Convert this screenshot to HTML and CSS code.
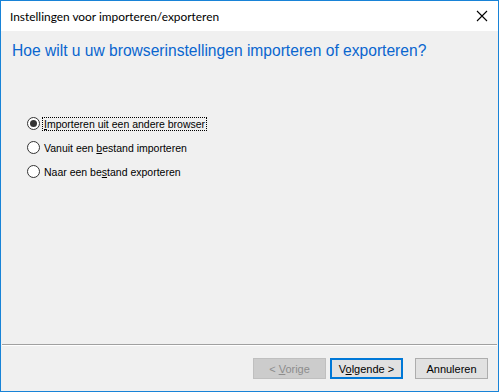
FILE: index.html
```html
<!DOCTYPE html>
<html lang="nl">

<head>
    <meta charset="UTF-8">
    <title>Instellingen voor importeren/exporteren</title>
    <link rel="stylesheet" href="styles.css">
</head>

<body>
    <div class="window">

        <div class="titlebar">
            <span class="title">Instellingen voor importeren/exporteren</span>
            <svg class="close" width="12" height="12" viewBox="0 0 12 12">
                <path d="M1 1 L11 11 M11 1 L1 11" stroke="#000" stroke-width="1.1" fill="none"/>
            </svg>
        </div>

        <div class="content">
            <h1 class="question">Hoe wilt u uw browserinstellingen importeren of exporteren?</h1>

            <div class="options">
                <label class="option">
                    <span class="radio checked"></span>
                    <span class="label focus"><u>I</u>mporteren uit een andere browser</span>
                </label>
                <label class="option">
                    <span class="radio"></span>
                    <span class="label">Vanuit een <u>b</u>estand importeren</span>
                </label>
                <label class="option">
                    <span class="radio"></span>
                    <span class="label">Naar een be<u>s</u>tand exporteren</span>
                </label>
            </div>
        </div>

        <div class="separator"></div>

        <div class="footer">
            <button type="button" class="btn disabled">&lt; <u>V</u>orige</button>
            <button type="button" class="btn default">V<u>o</u>lgende &gt;</button>
            <button type="button" class="btn cancel">Annuleren</button>
        </div>
    </div>
</body>

</html>
```

FILE: styles.css
```css
html, body {
    margin: 0;
    padding: 0;
}

.window {
    width: 499px;
    height: 392px;
    box-sizing: border-box;
    border: 1px solid #1883d7;
    background-color: #f0f0f0;
    display: flex;
    flex-direction: column;
    font-family: "Liberation Sans", Arial, sans-serif;
}

.titlebar {
    height: 30px;
    background-color: #fff;
    display: flex;
    align-items: center;
    justify-content: space-between;
    padding: 0 10px 0 9px;
}

.title {
    font-family: "Lato", "Open Sans", sans-serif;
    font-size: 11.9px;
    color: #000;
}

.content {
    flex: 1;
    padding: 0 11px;
}

.question {
    font-weight: normal;
    font-size: 15.6px;
    color: #0a66cf;
    margin: 10px 0 0 0;
    line-height: 20px;
}

.options {
    display: flex;
    flex-direction: column;
    gap: 11px;
    margin-top: 56px;
    padding-left: 15px;
}

.option {
    display: flex;
    align-items: center;
    height: 13px;
    font-size: 10.5px;
    color: #000;
}

.radio {
    width: 11px;
    height: 11px;
    border: 1px solid #333;
    border-radius: 50%;
    background-color: #fff;
    position: relative;
    margin-right: 2px;
}

.radio.checked::after {
    content: "";
    position: absolute;
    left: 2px;
    top: 2px;
    width: 7px;
    height: 7px;
    border-radius: 50%;
    background-color: #333;
}

.label {
    padding: 0 1px;
    border: 1px dotted transparent;
}

.label.focus {
    border-color: #000;
}

.separator {
    height: 1px;
    background-color: #a0a0a0;
    border-bottom: 1px solid #fff;
    margin: 0 1px;
}

.footer {
    height: 45px;
    display: flex;
    align-items: center;
    justify-content: flex-end;
    padding: 0 10px 0 0;
    box-sizing: border-box;
}

.btn {
    width: 73px;
    height: 21px;
    margin-left: 4px;
    font-family: "Liberation Sans", Arial, sans-serif;
    font-size: 11px;
    color: #000;
    background-color: #e1e1e1;
    border: 1px solid #adadad;
    border-radius: 0;
    padding: 0;
}

.btn.disabled {
    background-color: #cccccc;
    border-color: #bfbfbf;
    color: #8d8d8d;
}

.btn.default {
    border: 2px solid #0078d7;
}

.btn.cancel {
    margin-left: 12px;
}
```
